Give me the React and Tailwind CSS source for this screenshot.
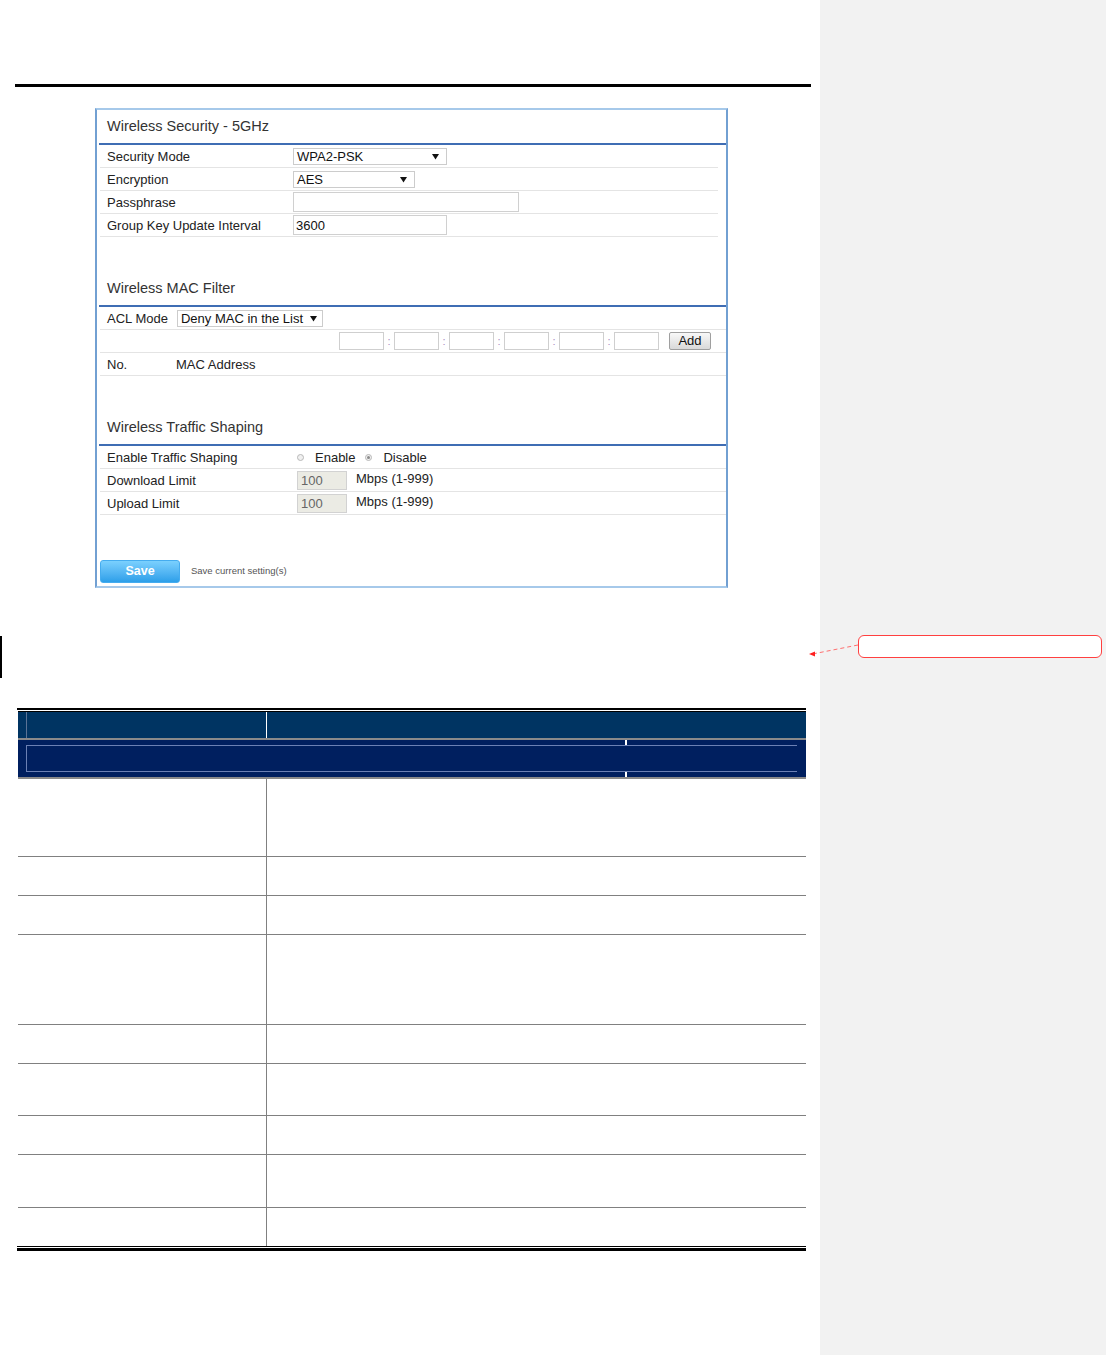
import React from "react";

function Tri() {
  return (
    <svg width="7" height="7" viewBox="0 0 7 7" className="shrink-0">
      <path d="M0 1h7L3.5 6.5z" fill="#111" />
    </svg>
  );
}

function Select({ w, text, pr }) {
  return (
    <div className={`${w} ${pr} h-[17px] border border-[#cccccc] bg-white flex items-center justify-between pl-[3px] text-[13px] leading-none text-[#111]`}>
      <span>{text}</span>
      <Tri />
    </div>
  );
}

function Row({ children, cls = "" }) {
  return (
    <div className={`h-[23px] border-b border-[#e4e4e4] flex items-center text-[13px] text-[#222] leading-none ${cls}`}>
      {children}
    </div>
  );
}

function Title({ text }) {
  return (
    <>
      <div className="h-[33px] pt-[8px] pl-[7px] text-[14.5px] leading-[16px] text-[#333]">{text}</div>
      <div className="h-[2px] -ml-[1px] bg-[#3f6db4]" />
    </>
  );
}

function MacBox() {
  return <div className="w-[45px] h-[18px] border border-[#cfcfcf] bg-white" />;
}

function Colon() {
  return <div className="w-[10px] text-center text-[11px] leading-none text-[#a98cc0]">:</div>;
}

function Radio({ checked }) {
  return (
    <div className="w-[7px] h-[7px] rounded-full border border-[#b8b8b8] bg-[#f0f0f0] flex items-center justify-center shrink-0">
      {checked && <div className="w-[3px] h-[3px] rounded-full bg-[#8a8a8a]" />}
    </div>
  );
}

function Panel() {
  return (
    <div className="mt-[21px] ml-[95px] w-[633px] h-[480px] border-2 border-[#a6c9ea] border-l-[#72a0d2] border-r-[#72a0d2] bg-white">
      <div className="pl-[3px]">
        <Title text="Wireless Security - 5GHz" />
        <div className="mr-[8px]">
          <Row>
            <div className="w-[193px] pl-[7px]">Security Mode</div>
            <Select w="w-[154px]" pr="pr-[7px]" text="WPA2-PSK" />
          </Row>
          <Row>
            <div className="w-[193px] pl-[7px]">Encryption</div>
            <Select w="w-[122px]" pr="pr-[7px]" text="AES" />
          </Row>
          <Row>
            <div className="w-[193px] pl-[7px]">Passphrase</div>
            <div className="w-[226px] h-[20px] border border-[#d0d0d0] bg-white" />
          </Row>
          <Row>
            <div className="w-[193px] pl-[7px]">Group Key Update Interval</div>
            <div className="w-[154px] h-[20px] border border-[#d0d0d0] bg-white flex items-center pl-[2px] text-[13px] text-[#111]">3600</div>
          </Row>
        </div>

        <div className="h-[35px]" />
        <Title text="Wireless MAC Filter" />
        <Row cls="pl-[7px] gap-[9px]">
          <div>ACL Mode</div>
          <Select w="w-[146px]" pr="pr-[5px]" text="Deny MAC in the List" />
        </Row>
        <Row cls="justify-end pr-[15px]">
          <MacBox />
          <Colon />
          <MacBox />
          <Colon />
          <MacBox />
          <Colon />
          <MacBox />
          <Colon />
          <MacBox />
          <Colon />
          <MacBox />
          <div className="ml-[10px] -mt-[1px] w-[42px] h-[18px] border border-[#9f9f9f] rounded-[2px] bg-linear-to-b from-[#f8f8f8] to-[#d9d9d9] flex items-center justify-center text-[13px] text-[#111]">Add</div>
        </Row>
        <Row cls="pl-[7px]">
          <div className="w-[69px]">No.</div>
          <div>MAC Address</div>
        </Row>

        <div className="h-[35px]" />
        <Title text="Wireless Traffic Shaping" />
        <Row>
          <div className="w-[197px] pl-[7px]">Enable Traffic Shaping</div>
          <Radio />
          <div className="ml-[11px]">Enable</div>
          <div className="ml-[10px]"><Radio checked /></div>
          <div className="ml-[11px]">Disable</div>
        </Row>
        <Row>
          <div className="w-[197px] pl-[7px]">Download Limit</div>
          <div className="w-[50px] h-[19px] border border-[#d2d2d2] bg-[#ebebe4] flex items-center pl-[3px] text-[13px] text-[#666]">100</div>
          <div className="ml-[9px] -mt-[3px]">Mbps (1-999)</div>
        </Row>
        <Row>
          <div className="w-[197px] pl-[7px]">Upload Limit</div>
          <div className="w-[50px] h-[19px] border border-[#d2d2d2] bg-[#ebebe4] flex items-center pl-[3px] text-[13px] text-[#666]">100</div>
          <div className="ml-[9px] -mt-[3px]">Mbps (1-999)</div>
        </Row>

        <div className="mt-[45px] flex items-center">
          <div className="w-[80px] h-[23px] rounded-[3px] border border-[#45acef] bg-linear-to-b from-[#7ad0fe] to-[#2b9fe9] flex items-center justify-center text-white text-[12.5px] font-bold">Save</div>
          <div className="ml-[11px] text-[9.5px] text-[#555]">Save current setting(s)</div>
        </div>
      </div>
    </div>
  );
}

function BodyRow({ h, last }) {
  return (
    <div className={`${h} flex ${last ? "" : "border-b border-[#808080]"}`}>
      <div className="w-[249px] border-r border-[#808080]" />
      <div className="flex-1" />
    </div>
  );
}

function Table() {
  return (
    <div className="mt-[30px] ml-[18px] w-[788px] flex flex-col">
      <div className="h-[2px] bg-black -ml-[1px]" />
      <div className="h-[1px]" />
      <div className="h-[1px] bg-black" />
      <div className="h-[26px] bg-[#003462] flex">
        <div className="w-[249px] h-full border-r-[1.5px] border-white">
          <div className="ml-[8px] h-full border-l border-[#5a7396]" />
        </div>
      </div>
      <div className="h-[2px] bg-[#8a8a8a]" />
      <div className="h-[37px] bg-[#001f5f] flex flex-col">
        <div className="h-[5px]">
          <div className="ml-[607px] w-[1.5px] h-full bg-white" />
        </div>
        <div className="ml-[8px] mr-[9px] h-[27px] border-t border-b border-l border-[#6b80b4]" />
        <div className="h-[5px]">
          <div className="ml-[607px] w-[1.5px] h-full bg-white" />
        </div>
      </div>
      <div className="h-[2px] bg-[#8a8a8a]" />
      <BodyRow h="h-[78px]" />
      <BodyRow h="h-[39px]" />
      <BodyRow h="h-[39px]" />
      <BodyRow h="h-[90px]" />
      <BodyRow h="h-[39px]" />
      <BodyRow h="h-[52px]" />
      <BodyRow h="h-[39px]" />
      <BodyRow h="h-[53px]" />
      <BodyRow h="h-[38px]" last />
      <div className="h-[1px] bg-black -ml-[1px]" />
      <div className="h-[1px]" />
      <div className="h-[3px] bg-black -ml-[1px]" />
    </div>
  );
}

export default function App() {
  return (
    <div className="relative flex w-[1106px] h-[1355px] bg-white overflow-hidden font-['Liberation_Sans',Arial,sans-serif]">
      <div className="w-[820px] flex flex-col">
        <div className="mt-[84px] ml-[15px] w-[796px] h-[3px] bg-black" />
        <Panel />
        <div className="mt-[48px] w-[2px] h-[42px] bg-black" />
        <Table />
      </div>
      <div className="w-[286px] h-full bg-[#f2f2f2]">
        <div className="mt-[635px] ml-[38px] w-[244px] h-[23px] border border-[#ff4040] rounded-[6px] bg-white" />
      </div>
      <svg className="absolute left-[806px] top-[640px]" width="56" height="20" viewBox="0 0 56 20">
        <line x1="52" y1="5" x2="9" y2="13.5" stroke="#ff7070" strokeWidth="1" strokeDasharray="4 3" />
        <polygon points="3,14 9,11.5 9,16.5" fill="#ff2020" />
      </svg>
    </div>
  );
}
